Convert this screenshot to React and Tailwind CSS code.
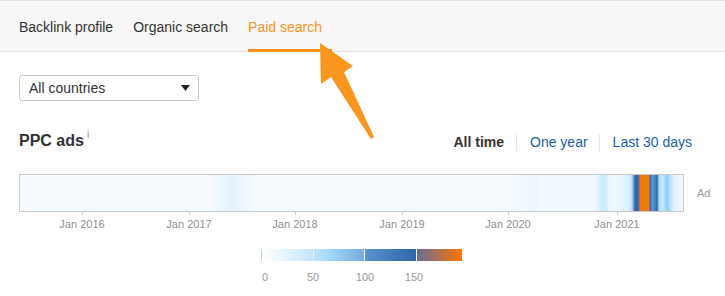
import React from 'react';

const TABS = [
  { id: 'backlink', label: 'Backlink profile' },
  { id: 'organic', label: 'Organic search' },
  { id: 'paid', label: 'Paid search', active: true },
];

// tick positions relative to the chart box left edge
const TICKS = [
  { label: 'Jan 2016', x: 63 },
  { label: 'Jan 2017', x: 170 },
  { label: 'Jan 2018', x: 276 },
  { label: 'Jan 2019', x: 383 },
  { label: 'Jan 2020', x: 489 },
  { label: 'Jan 2021', x: 598 },
];

// heatmap colour stops (x in px inside the 665px box)
const HEAT = [
  [0, '#f5fbff'],
  [190, '#f5fbff'],
  [204, '#eaf6fe'],
  [213, '#e2f2fd'],
  [222, '#edf7fe'],
  [236, '#f5fbff'],
  [495, '#f5fbff'],
  [518, '#eef7fe'],
  [528, '#f3faff'],
  [576, '#f2f9ff'],
  [579, '#e6f4fe'],
  [583, '#cdeafc'],
  [588, '#d2ecfc'],
  [591, '#eaf6fe'],
  [600, '#f0f8ff'],
  [606, '#e2f2fd'],
  [612, '#d4edfc'],
  [614, '#a6d8f7'],
  [617, '#2f63a8'],
  [620, '#3468ab'],
  [621, '#4a7fc0'],
  [622, '#ee790c'],
  [631, '#f07a0a'],
  [632, '#2f63a8'],
  [634, '#5e97d6'],
  [637, '#4a7fc0'],
  [639, '#2e65ad'],
  [641, '#a9dcf8'],
  [645, '#c6e7fb'],
  [649, '#91cdf5'],
  [653, '#c2e5fb'],
  [657, '#e6f4fe'],
  [665, '#f2f9ff'],
];

const LEGEND_LABELS = [
  { label: '0', x: 4 },
  { label: '50', x: 52 },
  { label: '100', x: 104 },
  { label: '150', x: 153 },
];

function Heatmap() {
  return (
    <svg width="663" height="36" className="block">
      <defs>
        <linearGradient id="heat" gradientUnits="userSpaceOnUse" x1="0" y1="0" x2="663" y2="0">
          {HEAT.map(([x, c], i) => (
            <stop key={i} offset={`${(x / 665) * 100}%`} stopColor={c} />
          ))}
        </linearGradient>
      </defs>
      <rect x="0" y="0" width="663" height="36" fill="url(#heat)" />
    </svg>
  );
}

function Legend() {
  return (
    <svg width="201" height="12" className="block">
      <defs>
        <linearGradient id="legend" x1="0" y1="0" x2="1" y2="0">
          <stop offset="0%" stopColor="#ffffff" />
          <stop offset="12%" stopColor="#e6f5fe" />
          <stop offset="25%" stopColor="#c4e6fb" />
          <stop offset="35%" stopColor="#9fd6f7" />
          <stop offset="51%" stopColor="#77abdc" />
          <stop offset="52%" stopColor="#5b93cf" />
          <stop offset="77%" stopColor="#2f64ab" />
          <stop offset="78%" stopColor="#6a6e98" />
          <stop offset="100%" stopColor="#ff7400" />
        </linearGradient>
      </defs>
      <rect x="0" y="0" width="201" height="12" fill="url(#legend)" />
      <rect x="0" y="0" width="1" height="12" fill="#cfcfcf" />
      <rect x="52" y="0" width="1" height="12" fill="#ffffff" opacity="0.5" />
      <rect x="103" y="0" width="1" height="12" fill="#ffffff" />
      <rect x="155" y="0" width="1" height="12" fill="#ffffff" />
    </svg>
  );
}

function Arrow() {
  return (
    <svg width="725" height="296" className="absolute left-0 top-0 pointer-events-none">
      <polygon
        points="320,43 353,66 344,72 374,137 371,139 331,77 321,84"
        fill="#f8961d"
      />
    </svg>
  );
}

export default function App() {
  return (
    <div className="relative w-[725px] h-[296px] bg-white overflow-hidden font-['Liberation_Sans',Arial,sans-serif]">
      {/* Tabs */}
      <div className="h-[52px] bg-[#f7f7f7] border-t border-b border-[#e3e3e3] flex items-stretch gap-5 px-[19px]">
        {TABS.map(t => (
          <div
            key={t.id}
            className={`relative flex items-center text-[14px] pt-[2px] ${t.active ? 'text-[#f7931e]' : 'text-[#333]'}`}
          >
            {t.label}
            {t.active && (
              <span className="absolute left-0 right-[-10px] bottom-[-1px] h-[3px] bg-[#f78f1e]" />
            )}
          </div>
        ))}
      </div>

      <div className="px-[19px]">
        {/* Country select */}
        <div className="mt-[23px] w-[180px] h-[26px] border border-[#c9c9c9] rounded-[3px] flex items-center justify-between pl-[9px] pr-[8px]">
          <span className="text-[14px] text-[#333]">All countries</span>
          <svg width="9" height="6" viewBox="0 0 9 6">
            <polygon points="0,0 9,0 4.5,6" fill="#222" />
          </svg>
        </div>

        {/* Title row */}
        <div className="mt-[29px] h-[22px] flex items-center justify-between pr-[14px]">
          <div className="flex items-start">
            <span className="text-[16px] font-bold text-[#333]">PPC ads</span>
            <span className="ml-[3px] text-[10px] text-[#999] leading-none mt-[1px]">i</span>
          </div>
          <div className="flex items-center text-[14px] mt-[2px]">
            <span className="font-bold text-[#333]">All time</span>
            <span className="ml-[12px] mr-[13px] w-px h-[17px] bg-[#e6e6e6]" />
            <span className="text-[#1d5ea8]">One year</span>
            <span className="ml-[11px] mr-[13px] w-px h-[17px] bg-[#e6e6e6]" />
            <span className="text-[#1d5ea8]">Last 30 days</span>
          </div>
        </div>

        {/* Heatmap */}
        <div className="mt-[22px] flex items-center">
          <div className="w-[665px] h-[38px] border border-[#c9c9c9]">
            <Heatmap />
          </div>
          <span className="ml-[13px] text-[11px] text-[#999]">Ad</span>
        </div>
        <div className="relative w-[665px] h-[20px]">
          {TICKS.map(t => (
            <div key={t.label} className="absolute top-0" style={{ left: t.x }}>
              <div className="w-px h-[3px] bg-[#ccc]" />
              <span className="absolute top-[4px] -translate-x-1/2 whitespace-nowrap text-[11px] text-[#8f8f8f]">
                {t.label}
              </span>
            </div>
          ))}
        </div>

        {/* Legend */}
        <div className="relative ml-[242px] mt-[17px] w-[201px]">
          <Legend />
          <div className="relative h-[20px]">
            {LEGEND_LABELS.map(l => (
              <span
                key={l.label}
                className="absolute top-[8px] -translate-x-1/2 text-[11px] text-[#9a9a9a]"
                style={{ left: l.x }}
              >
                {l.label}
              </span>
            ))}
          </div>
        </div>
      </div>

      <Arrow />
    </div>
  );
}
